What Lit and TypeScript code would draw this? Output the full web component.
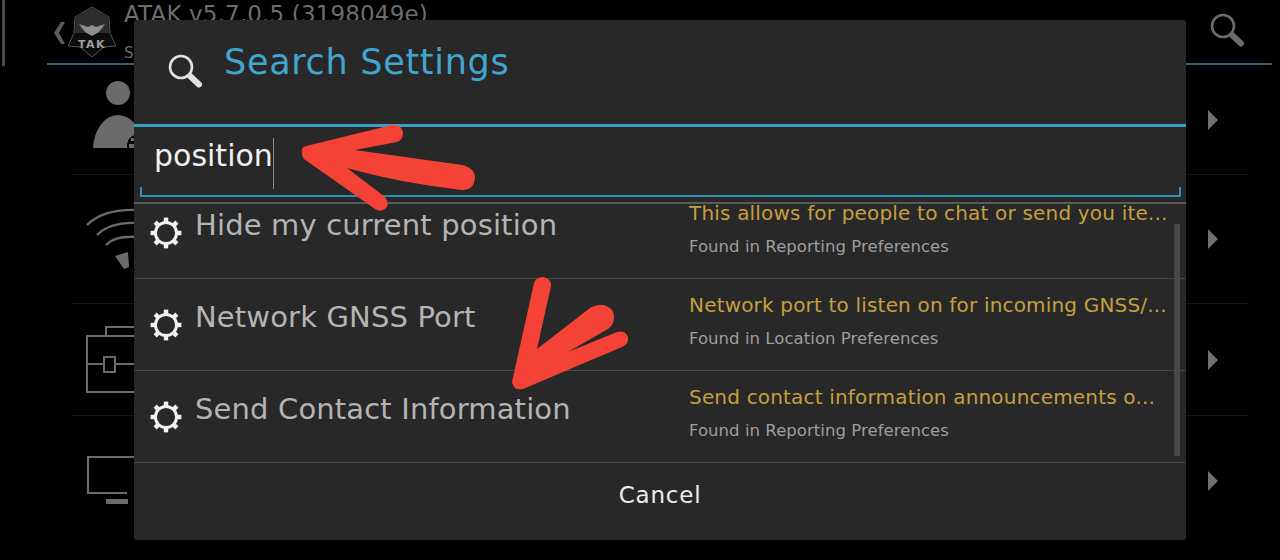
import { LitElement, html, css, svg } from "lit";
import { customElement } from "lit/decorators.js";

const results = [
  { name: "Hide my current position", desc: "This allows for people to chat or send you ite...", found: "Found in Reporting Preferences" },
  { name: "Network GNSS Port", desc: "Network port to listen on for incoming GNSS/...", found: "Found in Location Preferences" },
  { name: "Send Contact Information", desc: "Send contact information announcements o...", found: "Found in Reporting Preferences" },
];

const gear = html`<svg class="gear" viewBox="0 0 32 32">
  <circle cx="16" cy="16" r="10.6" fill="none" stroke="#f2f2f2" stroke-width="3"></circle>
  ${[0, 45, 90, 135, 180, 225, 270, 315].map(
    (a) => svg`<rect x="13.8" y="0.6" width="4.4" height="5" fill="#f2f2f2" transform="rotate(${a} 16 16)"></rect>`
  )}
</svg>`;

const magnifier = (c: string) => html`<svg class="mag" viewBox="0 0 36 36">
  <circle cx="14" cy="14" r="11" fill="none" stroke=${c} stroke-width="2.6"></circle>
  <path d="M23 23 L32 31.5" stroke=${c} stroke-width="6" stroke-linecap="round"></path>
</svg>`;

const tri = html`<svg class="tri" viewBox="0 0 10 20"><path d="M0 0 L10 10 L0 20Z" fill="#6f6f6f"></path></svg>`;

const icons = [
  html`<svg class="ric person" viewBox="0 0 60 67">
    <circle cx="25" cy="12" r="12" fill="#6b6b6b"></circle>
    <path d="M0 67 C1 48 12 34 25 34 C38 34 50 48 51 67Z" fill="#6b6b6b"></path>
    <circle cx="46" cy="65" r="12" fill="#000"></circle>
    <path d="M38 57 H41 V60 H38Z M36 63 H41 V67 H36Z" fill="#6b6b6b"></path>
  </svg>`,
  html`<svg class="ric wifi" viewBox="0 0 60 64" fill="none" stroke="#6b6b6b" stroke-width="2.4"><path d="M1 18 C12 7 28 2 52 3"></path><path d="M11 28 C20 19 32 15 52 16"></path><path d="M20 38 C26 32 34 29 52 30"></path><path d="M29 49 L42 45 L43 60 L38 62Z" fill="#6b6b6b" stroke="none"></path></svg>`,
  html`<svg class="ric brief" viewBox="0 0 60 70" fill="none" stroke="#6b6b6b" stroke-width="2"><path d="M1 11 H58 V67 H1Z"></path><path d="M20 11 V2 H58"></path><path d="M1 39 H18 M29 39 H58"></path><rect x="18" y="32" width="11" height="15"></rect></svg>`,
  html`<svg class="ric screenic" viewBox="0 0 60 52" fill="none" stroke="#6b6b6b" stroke-width="2.2"><path d="M58 2 H2 V38 H41"></path><rect x="20" y="44" width="22" height="5" fill="#6b6b6b" stroke="none"></rect></svg>`,
];

@customElement("app-root")
export class AppRoot extends LitElement {
  static styles = css`
    :host { display: block; position: relative; width: 1280px; height: 560px; background: #000; overflow: hidden; font-family: "DejaVu Sans", "Liberation Sans", sans-serif; }
    .screen { display: flex; flex-direction: column; padding: 0 8px 0 47px; height: 560px; box-sizing: border-box; }
    .scrollthumb { position: absolute; left: 2px; top: 0; width: 3px; height: 66px; background: #4a4a4a; }
    .head { height: 63px; flex: none; display: flex; align-items: center; border-bottom: 2px solid #2c6274; padding-left: 6px; padding-right: 27px; }
    .chev { width: 13px; height: 24px; flex: none; margin-right: 2px; margin-top: 2px; }
    .logo { width: 48px; height: 50px; flex: none; }
    .htext { flex: 1; padding-left: 8px; align-self: stretch; color: #6d6d6d; font-size: 23px; line-height: 28px; letter-spacing: 0.15px; }
    .hsub { font-size: 15px; line-height: 18px; padding-top: 16px; }
    .head .mag { width: 36px; height: 36px; flex: none; margin-bottom: 3px; }
    .rows { display: flex; flex-direction: column; padding: 0 0 0 25px; margin-right: 24px; }
    .brow { display: flex; align-items: center; justify-content: space-between; padding: 0 30px 0 14px; border-bottom: 1px solid #161616; box-sizing: border-box; }
    .brow:nth-child(1) { height: 110px; }
    .brow:nth-child(2) { height: 129px; }
    .brow:nth-child(3) { height: 112px; }
    .brow:nth-child(4) { height: 130px; border: 0; }
    .tri { width: 10px; height: 20px; flex: none; }
    .ric { flex: none; width: 60px; }
    .person { height: 67px; margin-bottom: 11px; margin-left: 7px; margin-right: -7px; }
    .wifi { height: 64px; }
    .brief { height: 70px; }
    .screenic { height: 52px; }
    .dialog { position: absolute; left: 134px; top: 20px; width: 1052px; height: 520px; background: #282828; border-radius: 3px; display: flex; flex-direction: column; }
    .dhead { height: 104px; flex: none; display: flex; align-items: flex-start; border-bottom: 3px solid #3a9fc7; }
    .dhead .mag { width: 36px; height: 36px; flex: none; margin: 33px 0 0 33px; }
    .dtitle { color: #41a5cf; font-size: 35px; line-height: 40px; margin: 22px 0 0 21px; letter-spacing: 0.7px; }
    .fieldwrap { height: 77px; flex: none; border-bottom: 2px solid #5a5a5a; box-sizing: border-box; }
    .field { height: 70px; margin: 0 5px 0 6px; padding-left: 12px; display: flex; box-sizing: border-box; border-style: solid; border-width: 0 2px 2px 2px; border-image: linear-gradient(to top, #2f8fb4 9px, transparent 9px) 1; }
    .ftext { color: #f0f0f0; font-size: 30px; line-height: 36px; border-right: 1px solid #8a8a8a; margin-top: 11px; height: 51px; box-sizing: border-box; }
    .list { height: 258px; flex: none; position: relative; }
    .inner { margin-top: -17px; display: flex; flex-direction: column; }
    .rrow { height: 92px; flex: none; border-bottom: 1px solid #484848; box-sizing: border-box; display: grid; grid-template-columns: 61px 494px 486px; }
    .gearcell { display: flex; align-items: flex-start; padding: 30px 0 0 16px; }
    .gear { width: 32px; height: 32px; }
    .rname { color: #b4b4b4; font-size: 29px; line-height: 36px; padding-top: 20px; white-space: nowrap; letter-spacing: 0.15px; }
    .rtext { padding-top: 17px; min-width: 0; }
    .rdesc { color: #c4a03e; font-size: 20px; line-height: 18px; white-space: nowrap; letter-spacing: 0.18px; }
    .rfound { color: #9e9e9e; font-size: 16.5px; line-height: 22px; margin-top: 14px; white-space: nowrap; letter-spacing: 0.05px; }
    .bar { position: absolute; left: 1040px; top: 20px; width: 6px; height: 232px; background: #484848; }
    .cancel { flex: 1; display: flex; align-items: center; justify-content: center; color: #ededed; font-size: 23px; letter-spacing: 0.8px; padding-bottom: 12px; }
    .note { position: absolute; left: 0; top: 0; width: 1280px; height: 560px; pointer-events: none; }
  `;

  render() {
    return html`
      <div class="screen">
        <div class="head">
          <svg class="chev" viewBox="0 0 13 24"><path d="M8 1 L1 12 L8 23 L12 23 L6 12 L12 1Z" fill="#5d5d5d"></path></svg>
          <svg class="logo" viewBox="0 0 48 50">
            <path d="M24 0 L41 10 L42 26 L48 39 L36 40 L24 50 L12 40 L0 39 L6 26 L7 10Z" fill="#0c0c0c" stroke="#6a6a6a" stroke-width="0.8"></path>
            <path d="M24 1 L40 10.5 L41 26 L7 26 L8 10.5Z" fill="#2d2d2d"></path>
            <path d="M11 17 L20 20 L24 18 L28 20 L37 17 L31 25 L24 29 L17 25Z" fill="#8f8f8f"></path>
            <text x="24" y="41" text-anchor="middle" font-size="11" font-weight="700" fill="#a0a0a0" letter-spacing="1.5">TAK</text>
          </svg>
          <div class="htext">ATAK v5.7.0.5 (3198049e)<div class="hsub">S</div></div>
          ${magnifier("#6b6b6b")}
        </div>
        <div class="rows">
          ${icons.map((i) => html`<div class="brow">${i}${tri}</div>`)}
        </div>
      </div>
      <div class="scrollthumb"></div>
      <div class="dialog">
        <div class="dhead">${magnifier("#e2e2e2")}<div class="dtitle">Search Settings</div></div>
        <div class="fieldwrap"><div class="field"><div class="ftext">position</div></div></div>
        <div class="list">
          <div class="inner">
            ${results.map(
              (r) => html`<div class="rrow">
                <div class="gearcell">${gear}</div>
                <div class="rname">${r.name}</div>
                <div class="rtext"><div class="rdesc">${r.desc}</div><div class="rfound">${r.found}</div></div>
              </div>`
            )}
          </div>
          <div class="bar"></div>
        </div>
        <div class="cancel">Cancel</div>
      </div>
      <svg class="note" viewBox="0 0 1280 560">
        <path d="M302 150 Q302 147 306 146 L392 125 Q402 124 403 133 Q403 140 397 142 L355 150 L462 165 Q475 168 475 178 Q474 190 462 190 Q400 183 347 168 L385 197 Q390 204 386 208 Q381 213 375 209 L304 159 Q301 155 302 150Z" fill="#f44336"></path>
        <path d="M512 382 L534 283 Q536 277 543 277 Q552 279 551 286 L537 349 L590 308 Q598 304 604 305 Q614 308 614 317 Q614 325 608 329 L568 352 L617 332 Q625 330 628 337 Q629 344 622 347 L523 389 Q514 391 512 382Z" fill="#f44336"></path>
      </svg>
    `;
  }
}
